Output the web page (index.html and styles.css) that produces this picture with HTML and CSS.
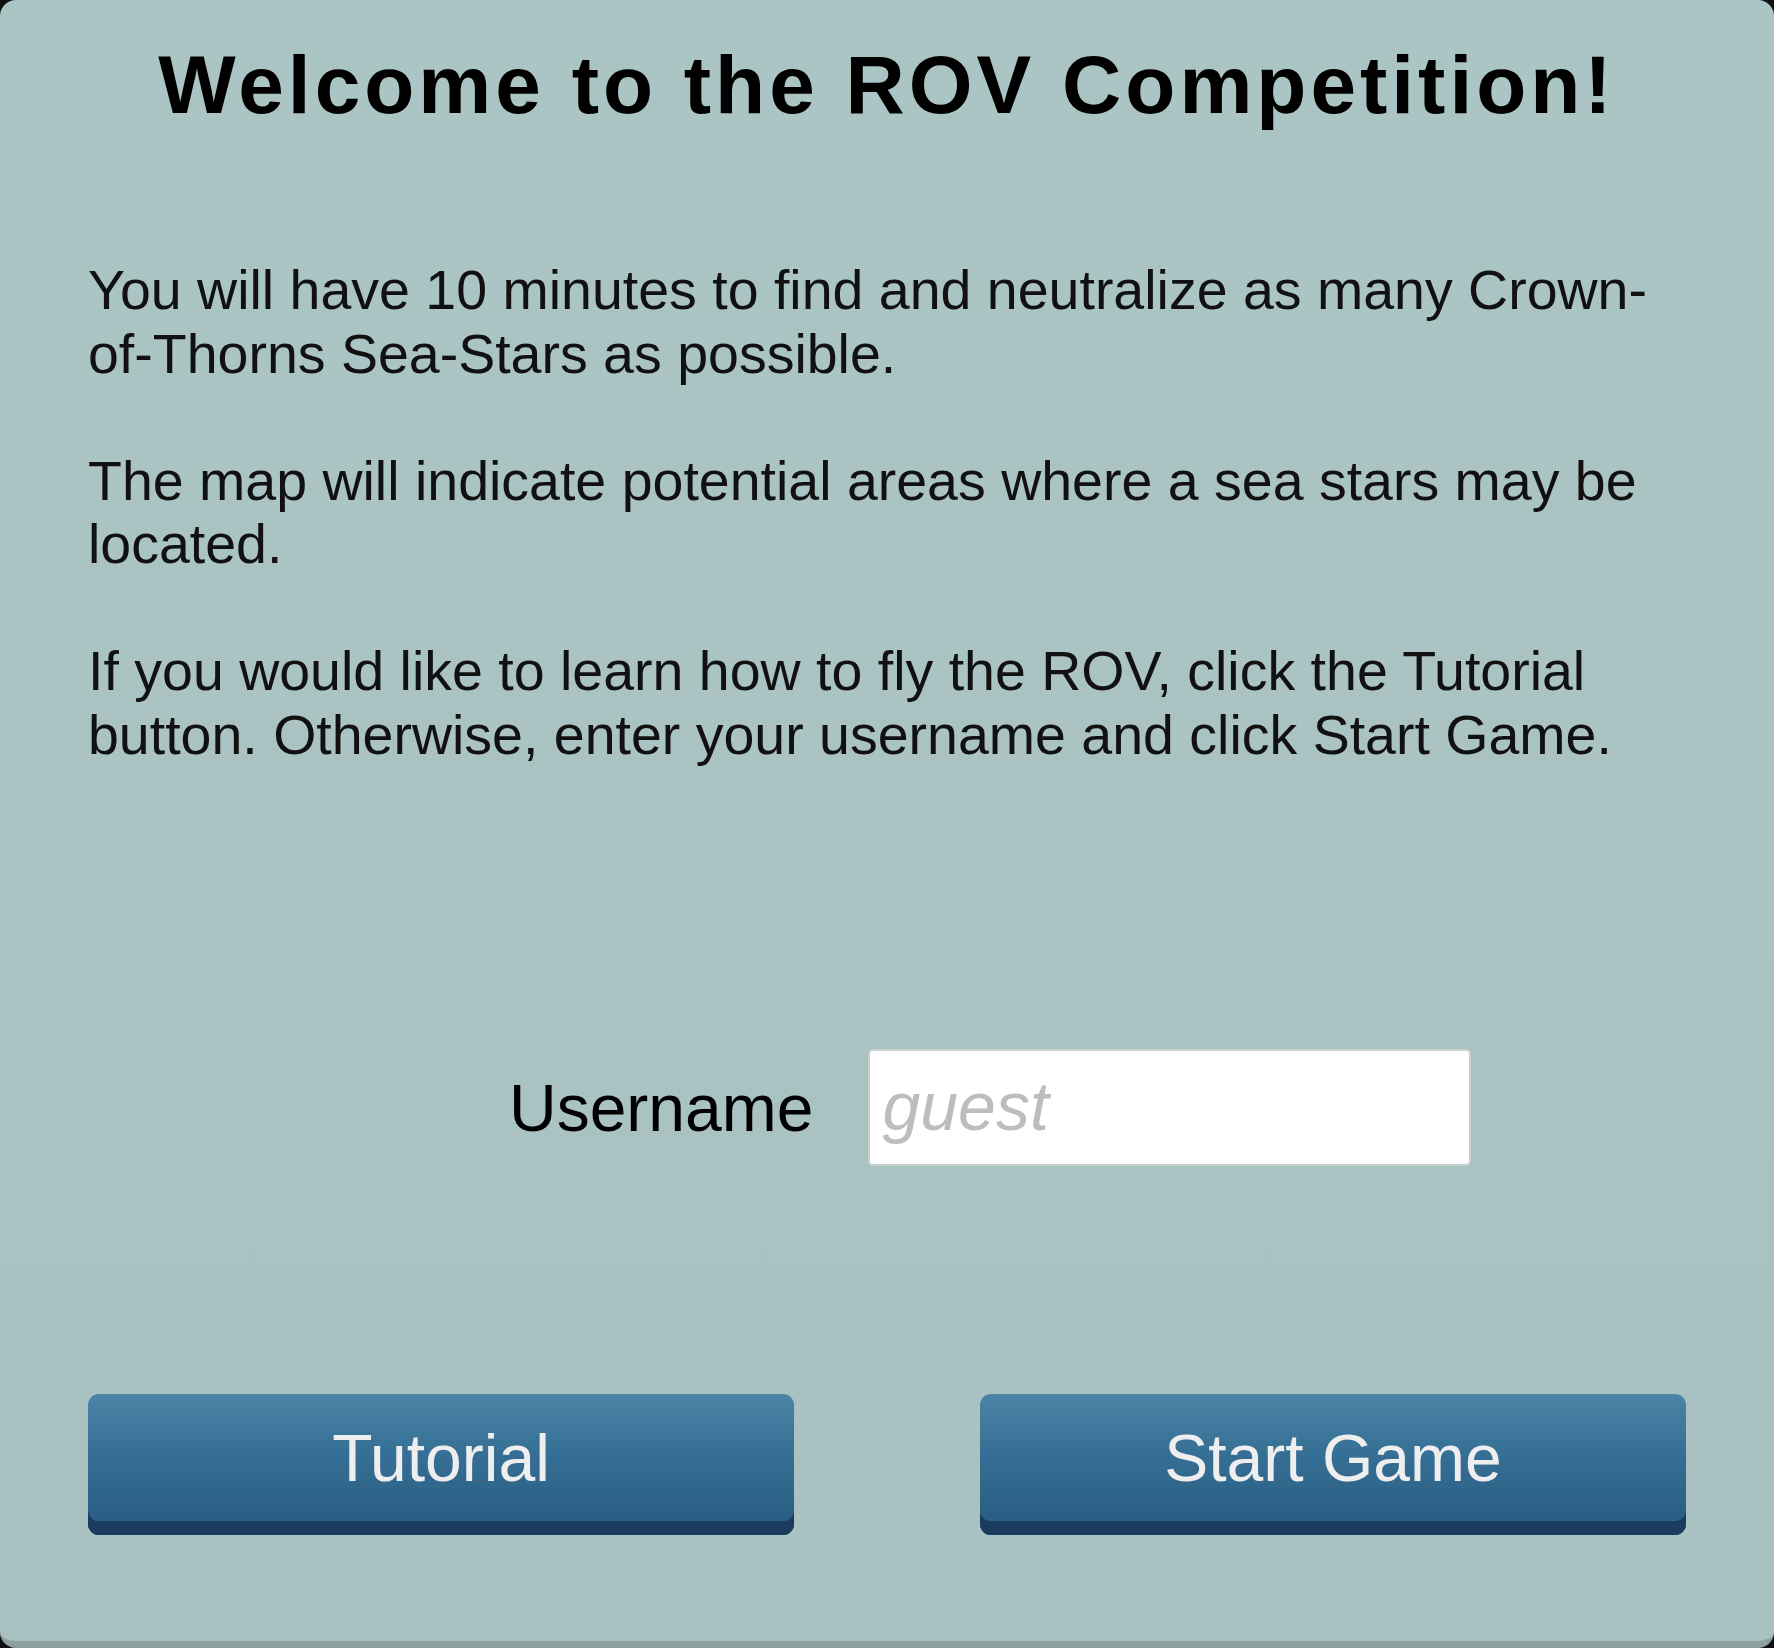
FILE: index.html
```html
<!DOCTYPE html>
<html lang="en">
<head>
<meta charset="utf-8">
<title>ROV Competition</title>
<link rel="stylesheet" href="styles.css">
</head>
<body>
<main class="panel">
  <h1 class="title">Welcome to the ROV Competition!</h1>
  <section class="intro">
    <p>You will have 10 minutes to find and neutralize as many Crown-of-Thorns Sea-Stars as possible.</p>
    <p>The map will indicate potential areas where a sea stars may be located.</p>
    <p>If you would like to learn how to fly the ROV, click the Tutorial button. Otherwise, enter your username and click Start Game.</p>
  </section>
  <div class="user-row">
    <label class="user-label" for="username">Username</label>
    <input class="user-input" id="username" type="text" placeholder="guest">
  </div>
  <div class="actions">
    <button class="btn" type="button">Tutorial</button>
    <button class="btn" type="button">Start Game</button>
  </div>
</main>
</body>
</html>
```

FILE: styles.css
```css
html, body {
  margin: 0;
  padding: 0;
  background: #111;
}

body {
  width: 1774px;
  height: 1648px;
  overflow: hidden;
  font-family: "Liberation Sans", Arial, sans-serif;
}

.panel {
  box-sizing: border-box;
  width: 1774px;
  height: 1648px;
  background: linear-gradient(180deg, #abc4c4 0%, #a9c1c1 100%);
  border-radius: 16px;
  border-bottom: 7px solid #8d9f9f;
  padding: 37px 88px 0 88px;
  display: flex;
  flex-direction: column;
}

.title {
  margin: 0;
  font-size: 82px;
  line-height: 96px;
  font-weight: bold;
  letter-spacing: 4px;
  text-align: center;
  color: #000;
}

.intro {
  margin-top: 126px;
  color: #111;
  font-size: 55.5px;
  line-height: 63.5px;
}

.intro p {
  margin: 0 0 63.5px 0;
}

.intro p:last-child {
  margin-bottom: 0;
}

.user-row {
  display: flex;
  align-items: center;
  gap: 55px;
  margin-top: 282px;
  margin-left: 421px;
}

.user-label {
  font-size: 66px;
  color: #000;
}

.user-input {
  box-sizing: border-box;
  width: 603px;
  height: 117px;
  margin: 0;
  padding: 0 0 4px 12px;
  border: 2px solid #c9d0d0;
  border-radius: 5px;
  background: #fff;
  font-family: "Liberation Sans", Arial, sans-serif;
  font-size: 68px;
  color: #222;
  outline: none;
}

.user-input::placeholder {
  color: #bdbdbd;
  font-style: italic;
}

.actions {
  display: flex;
  justify-content: space-between;
  margin-top: 228px;
}

.btn {
  box-sizing: border-box;
  width: 706px;
  height: 141px;
  margin: 0;
  padding: 0 0 14px 0;
  border: none;
  border-radius: 11px;
  background: linear-gradient(180deg, #4a84a6 0%, #356e94 45%, #275a80 100%);
  box-shadow: inset 0 -14px 0 #1c3c5d, inset 0 -16px 0 #2e6389;
  color: #eeeeee;
  font-family: "Liberation Sans", Arial, sans-serif;
  font-size: 66px;
  line-height: 1;
  cursor: pointer;
}
```
